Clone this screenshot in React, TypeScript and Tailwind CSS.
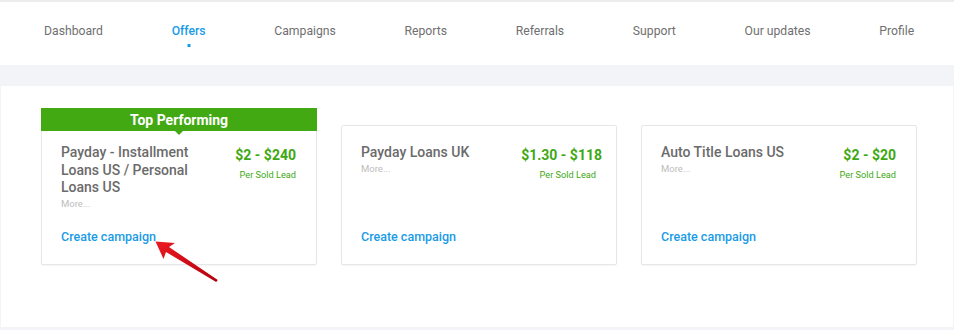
import React from "react";

const navItems = ["Dashboard", "Offers", "Campaigns", "Reports", "Referrals", "Support", "Our updates", "Profile"];

type Offer = { title: string; price: string; top?: boolean; wide?: boolean };

const offers: Offer[] = [
  { title: "Payday - Installment Loans US / Personal Loans US", price: "$2 - $240", top: true },
  { title: "Payday Loans UK", price: "$1.30 - $118", wide: true },
  { title: "Auto Title Loans US", price: "$2 - $20" },
];

function Card({ offer }: { offer: Offer }) {
  return (
    <div className="relative flex h-[140px] w-[276px] flex-col rounded-[2px] border border-[#e6e7ea] bg-white pb-[19px] pl-[19px] pr-[20px] pt-[18px] shadow-[0_1px_1px_rgba(0,0,0,0.04)]">
      {offer.top && (
        <div className="absolute left-[-1px] right-[-1px] top-[-18px] flex h-[23px] items-center justify-center bg-[#43a912] text-[14px] font-bold leading-none text-white">
          Top Performing
          <div className="absolute bottom-[-4px] left-1/2 h-0 w-0 -translate-x-1/2 border-l-[4px] border-r-[4px] border-t-[4px] border-l-transparent border-r-transparent border-t-[#43a912]" />
        </div>
      )}
      <div className="flex items-start justify-between">
        <div className="flex flex-col">
          <div className="w-[140px] text-[14px] font-medium leading-[17.5px] text-[#6b6b6b]">{offer.title}</div>
          <div className="text-[9.5px] leading-[13px] text-[#bdbdbd]">More...</div>
        </div>
        <div className="flex flex-col items-end">
          <div
            className={
              offer.wide
                ? "mr-[-6px] mt-[2px] text-[14px] font-bold leading-[18px] text-[#3ea812]"
                : "mt-[2px] text-[14px] font-bold leading-[18px] text-[#3ea812]"
            }
          >
            {offer.price}
          </div>
          <div className="mt-[5px] text-[9.2px] leading-[11px] text-[#3ea812]">Per Sold Lead</div>
        </div>
      </div>
      <div className="mt-auto text-[12.5px] font-medium leading-[16px] text-[#1a9be6]">Create campaign</div>
    </div>
  );
}

export default function App() {
  return (
    <div className="relative h-[330px] w-[954px] overflow-hidden bg-[#f3f4f8] font-['Roboto',_'Liberation_Sans',_sans-serif]">
      <div className="h-[2px] bg-[#ececee]" />
      <nav className="flex h-[63px] gap-[68.7px] bg-white pl-[44px] pt-[21px]">
        {navItems.map((item) => (
          <div
            key={item}
            className={
              item === "Offers"
                ? "relative text-[12.2px] font-medium leading-[16px] text-[#1a9be6]"
                : "text-[12.2px] leading-[16px] text-[#707070]"
            }
          >
            {item}
            {item === "Offers" && (
              <div className="absolute left-1/2 top-[21px] h-[3px] w-[3px] -translate-x-1/2 bg-[#1a9be6]" />
            )}
          </div>
        ))}
      </nav>
      <div className="h-[21px]" />
      <main className="mx-[1px] flex h-[241px] gap-[24px] bg-white pl-[40px] pt-[39px]">
        {offers.map((o) => (
          <Card key={o.title} offer={o} />
        ))}
      </main>
      <svg className="pointer-events-none absolute left-0 top-0" width="954" height="330" viewBox="0 0 954 330">
        <defs>
          <linearGradient id="ag" x1="0" y1="0" x2="1" y2="1">
            <stop offset="0" stopColor="#ec1a22" />
            <stop offset="1" stopColor="#b3000c" />
          </linearGradient>
        </defs>
        <polygon
          points="155.5,241.5 175,243 169,247 217.8,280 216.2,282 166,252 163.5,259"
          fill="url(#ag)"
        />
      </svg>
    </div>
  );
}
